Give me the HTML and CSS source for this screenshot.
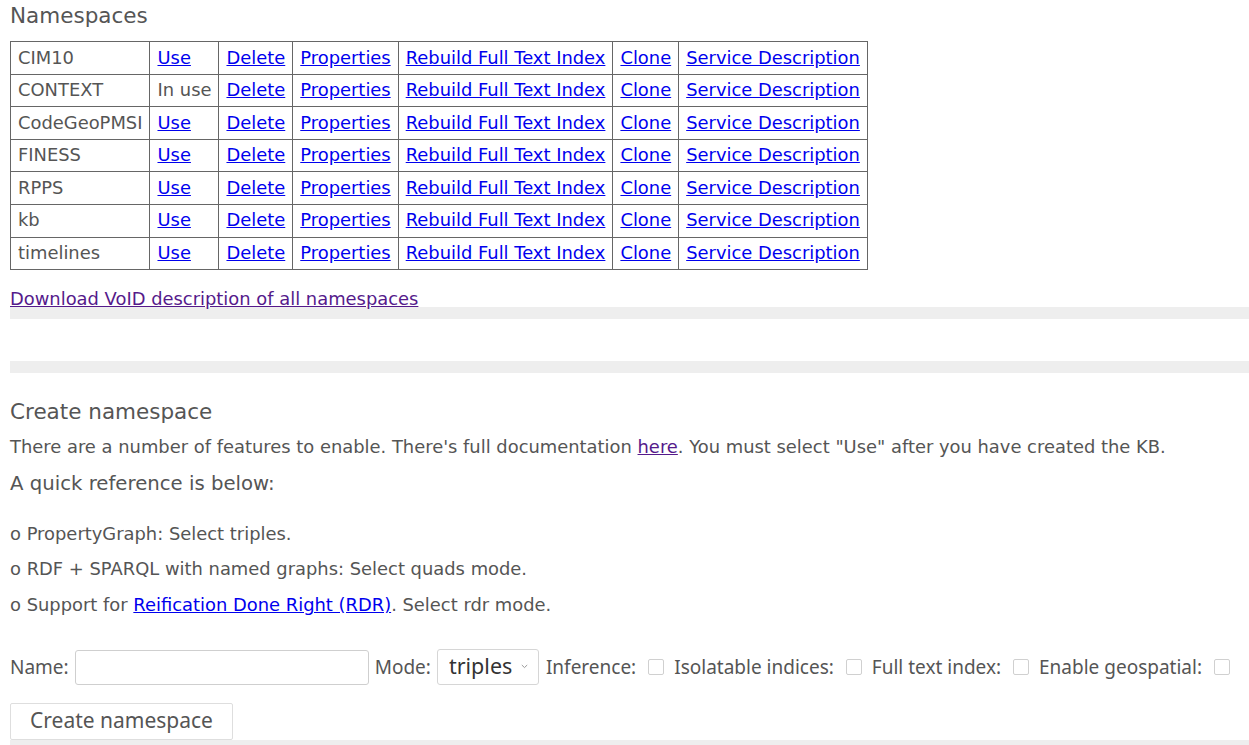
FILE: index.html
```html
<!DOCTYPE html>
<html>
<head>
<meta charset="utf-8">
<title>Namespaces</title>
<link rel="stylesheet" href="styles.css">
</head>
<body>
<h2 class="title first">Namespaces</h2>
<table class="ns">
  <tr><td>CIM10</td><td><a href="#">Use</a></td><td><a href="#">Delete</a></td><td><a href="#">Properties</a></td><td><a href="#">Rebuild Full Text Index</a></td><td><a href="#">Clone</a></td><td><a href="#">Service Description</a></td></tr>
  <tr><td>CONTEXT</td><td>In use</td><td><a href="#">Delete</a></td><td><a href="#">Properties</a></td><td><a href="#">Rebuild Full Text Index</a></td><td><a href="#">Clone</a></td><td><a href="#">Service Description</a></td></tr>
  <tr><td>CodeGeoPMSI</td><td><a href="#">Use</a></td><td><a href="#">Delete</a></td><td><a href="#">Properties</a></td><td><a href="#">Rebuild Full Text Index</a></td><td><a href="#">Clone</a></td><td><a href="#">Service Description</a></td></tr>
  <tr><td>FINESS</td><td><a href="#">Use</a></td><td><a href="#">Delete</a></td><td><a href="#">Properties</a></td><td><a href="#">Rebuild Full Text Index</a></td><td><a href="#">Clone</a></td><td><a href="#">Service Description</a></td></tr>
  <tr><td>RPPS</td><td><a href="#">Use</a></td><td><a href="#">Delete</a></td><td><a href="#">Properties</a></td><td><a href="#">Rebuild Full Text Index</a></td><td><a href="#">Clone</a></td><td><a href="#">Service Description</a></td></tr>
  <tr><td>kb</td><td><a href="#">Use</a></td><td><a href="#">Delete</a></td><td><a href="#">Properties</a></td><td><a href="#">Rebuild Full Text Index</a></td><td><a href="#">Clone</a></td><td><a href="#">Service Description</a></td></tr>
  <tr><td>timelines</td><td><a href="#">Use</a></td><td><a href="#">Delete</a></td><td><a href="#">Properties</a></td><td><a href="#">Rebuild Full Text Index</a></td><td><a href="#">Clone</a></td><td><a href="#">Service Description</a></td></tr>
</table>
<div class="void"><a class="visited" href="#">Download VoID description of all namespaces</a></div>
<div class="bar"></div>
<div class="bar bar2"></div>
<h2 class="title second">Create namespace</h2>
<p class="intro">There are a number of features to enable. There's full documentation <a class="visited" href="#">here</a>. You must select "Use" after you have created the KB.</p>
<p class="quick">A quick reference is below:</p>
<p class="item first-item">o PropertyGraph: Select triples.</p>
<p class="item">o RDF + SPARQL with named graphs: Select quads mode.</p>
<p class="item">o Support for <a href="#">Reification Done Right (RDR)</a>. Select rdr mode.</p>
<form class="create" onsubmit="return false">
  <div class="row">
    <label class="lbl">Name:</label>
    <input class="name" type="text">
    <label class="lbl">Mode:</label>
    <span class="sel-wrap">
      <select class="mode"><option>triples</option><option>quads</option><option>rdr</option></select>
      <svg class="chev" width="7" height="5" viewBox="0 0 7 5"><path d="M0.8 1 L3.5 3.6 L6.2 1" fill="none" stroke="#999" stroke-width="1"/></svg>
    </span>
    <label class="lbl">Inference:</label>
    <input class="cb" type="checkbox">
    <label class="lbl">Isolatable indices:</label>
    <input class="cb" type="checkbox">
    <label class="lbl">Full text index:</label>
    <input class="cb" type="checkbox">
    <label class="lbl">Enable geospatial:</label>
    <input class="cb" type="checkbox">
  </div>
  <button class="btn" type="button">Create namespace</button>
</form>
<div class="bar bar3"></div>
</body>
</html>
```
FILE: styles.css
```css
html, body {
  margin: 0;
  background: #fff;
}
body {
  padding: 0 0 0 10px;
  font-family: "DejaVu Sans", sans-serif;
  font-size: 17.9px;
  color: #555;
  overflow: hidden;
}
a {
  color: #0000ee;
}
a.visited {
  color: #551a8b;
}
.title {
  font-size: 21.5px;
  line-height: 26px;
  font-weight: normal;
  margin: 0;
}
.title.first {
  margin-top: 3px;
}
.title.second {
  margin-top: 26.5px;
}
.ns {
  border-collapse: collapse;
  margin-top: 12px;
}
.ns td {
  border: 1px solid #666;
  padding: 5.5px 7px;
  line-height: 20.6px;
  white-space: nowrap;
}
.void {
  margin-top: 20.8px;
  line-height: 16px;
}
.bar {
  background: #eeeeee;
  height: 12px;
}
.bar2 {
  margin-top: 42px;
}
.bar3 {
  height: 10px;
}
p {
  margin: 0;
}
.intro {
  margin-top: 11.5px;
  line-height: 20.6px;
}
.quick {
  margin-top: 14px;
  font-size: 19.7px;
  line-height: 23px;
}
.item {
  line-height: 20.6px;
  margin-top: 15.2px;
}
.item.first-item {
  margin-top: 29px;
}
.create {
  margin: 33px 0 0;
}
.row {
  display: flex;
  align-items: center;
  height: 36px;
  font-family: "Noto Sans", sans-serif;
  font-size: 19px;
  color: #555;
}
.lbl {
  margin-right: 6px;
  white-space: nowrap;
}
.name {
  box-sizing: border-box;
  width: 294px;
  height: 35px;
  margin: 1px 6px 0 0;
  border: 1px solid #cfcfcf;
  border-radius: 3px;
  padding: 0 8px;
  font-family: "Noto Sans", sans-serif;
  font-size: 19px;
  background: #fff;
}
.sel-wrap {
  position: relative;
  display: inline-block;
  margin-right: 7px;
  height: 36px;
}
.mode {
  -webkit-appearance: none;
  appearance: none;
  box-sizing: border-box;
  width: 102px;
  height: 36px;
  margin: 0;
  border: 1px solid #d6d6d6;
  border-radius: 3px;
  padding: 0 0 2px 11px;
  font-family: "Noto Sans", sans-serif;
  font-size: 21.5px;
  color: #333;
  background: #fff;
}
.chev {
  position: absolute;
  right: 11px;
  top: 15px;
  pointer-events: none;
}
.cb {
  -webkit-appearance: none;
  appearance: none;
  box-sizing: border-box;
  width: 16px;
  height: 16px;
  margin: 0 10px 0 6px;
  border: 1px solid #d0d0d0;
  border-radius: 2px;
  background: #fff;
}
.btn {
  display: block;
  box-sizing: border-box;
  margin-top: 18px;
  width: 223px;
  height: 37px;
  padding: 0 0 2px;
  border: 1px solid #dedede;
  border-radius: 2px;
  background: #fff;
  font-family: "Noto Sans", sans-serif;
  font-size: 21px;
  color: #555;
}
```
